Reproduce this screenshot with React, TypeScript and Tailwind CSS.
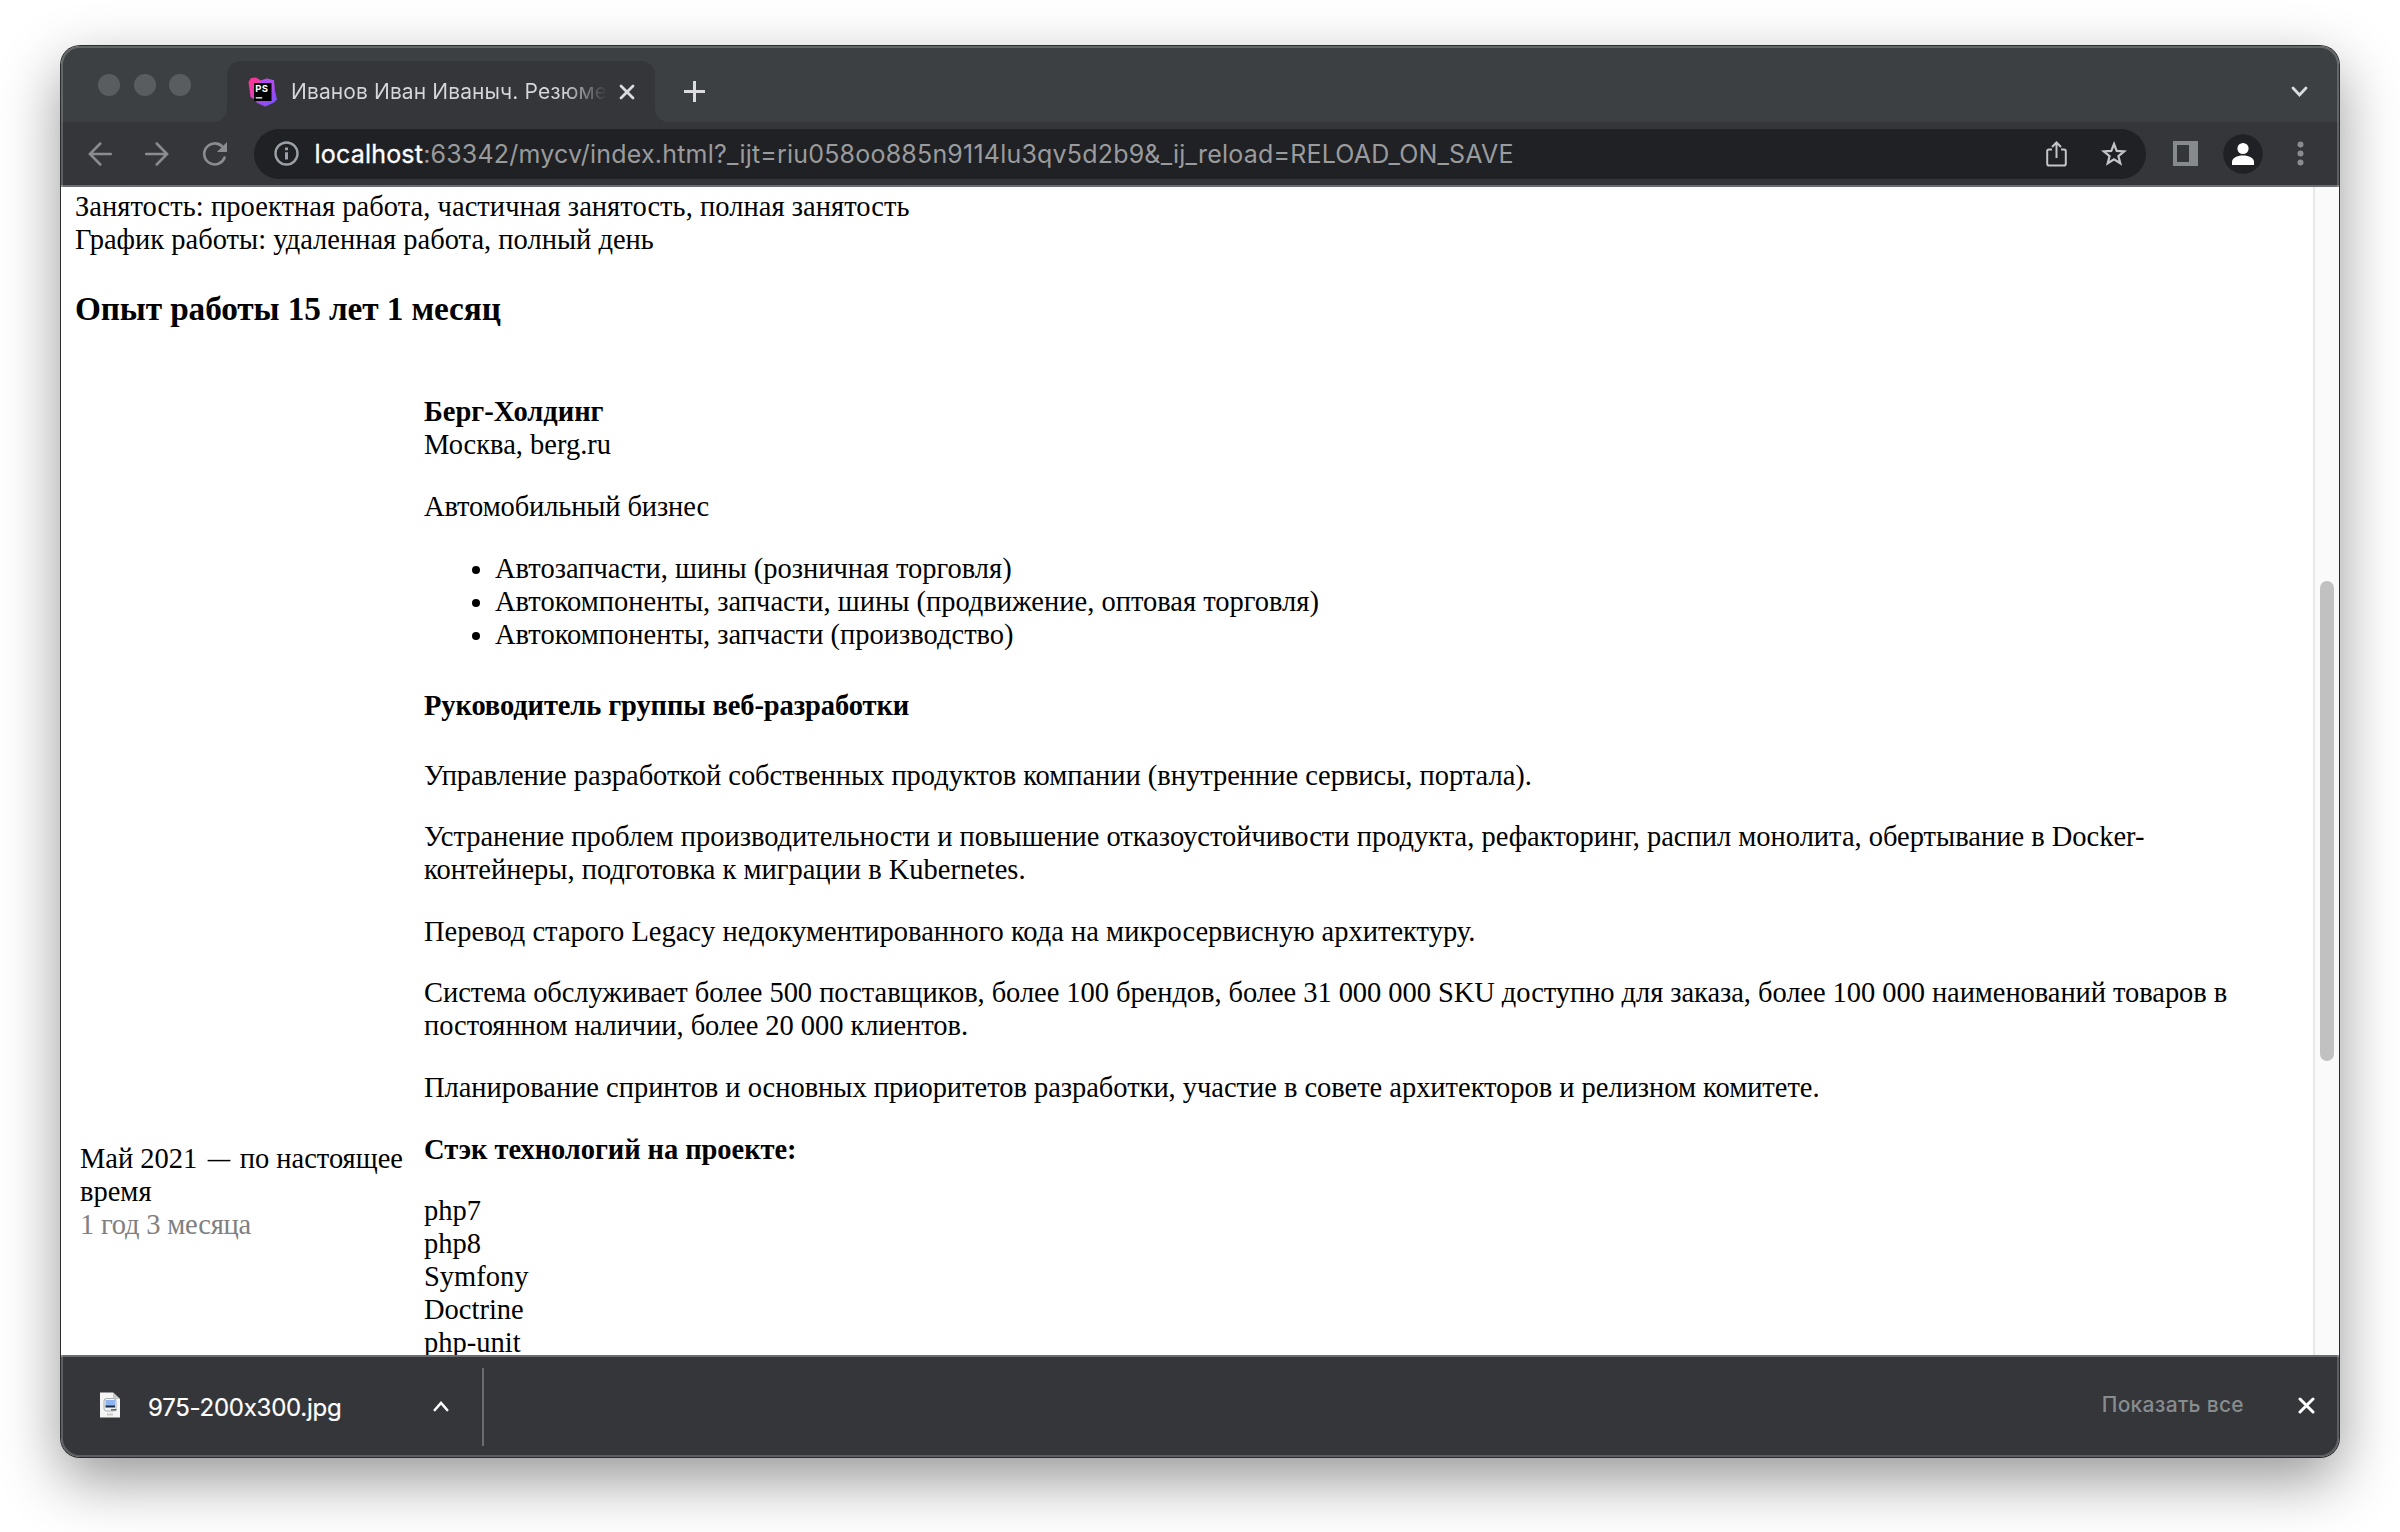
import React from "react";

const P = ({ children, className = "mt-[28.6px]" }: { children: React.ReactNode; className?: string }) => (
  <p className={className}>{children}</p>
);

function TabStrip() {
  return (
    <div className="flex h-[76px] shrink-0 bg-[#3d4042]">
      <div className="flex w-[152px] gap-[13.5px] pl-[37px] pt-[28px]">
        <span className="size-[22px] rounded-full bg-[#5a5d5f]" />
        <span className="size-[22px] rounded-full bg-[#5a5d5f]" />
        <span className="size-[22px] rounded-full bg-[#5a5d5f]" />
      </div>
      <div className="flex h-full items-end">
        <svg className="size-[14px]" viewBox="0 0 14 14" fill="#35363a"><path d="M0 14A14 14 0 0 0 14 0V14Z" /></svg>
        <div className="flex h-[61px] w-[428px] items-center rounded-t-[14px] bg-[#35363a] pl-[21px]">
          <Favicon />
          <span className="ml-[14px] w-[316px] overflow-hidden whitespace-nowrap bg-linear-to-r from-[#d6d7da] from-86% to-transparent bg-clip-text font-['Inter'] text-[21px] leading-[28px] tracking-[0.1px] text-transparent">
            Иванов Иван Иваныч. Резюме
          </span>
          <svg className="ml-[12px] size-[16px]" viewBox="0 0 16 16" stroke="#dadce0" strokeWidth="2.8" strokeLinecap="round"><path d="M2 2L14 14M14 2L2 14" /></svg>
        </div>
        <svg className="size-[14px]" viewBox="0 0 14 14" fill="#35363a"><path d="M14 14A14 14 0 0 1 0 0V14Z" /></svg>
      </div>
      <svg className="ml-[14px] mt-[34px] size-[23px]" viewBox="0 0 23 23" stroke="#dadce0" strokeWidth="3"><path d="M11.500 1V22M1 11.500H22" /></svg>
      <svg className="ml-auto mr-[31px] mt-[40px] h-[12px] w-[17px]" viewBox="0 0 17 12" fill="none" stroke="#dadce0" strokeWidth="2.800" strokeLinecap="round"><path d="M2 2L8.500 9L15 2" /></svg>
    </div>
  );
}

function Favicon() {
  return (
    <svg className="h-[30px] w-[29px]" viewBox="0 0 29 30">
      <defs>
        <linearGradient id="storm" x1="0" y1="0" x2="1" y2="1">
          <stop offset="0" stopColor="#ff318c" />
          <stop offset="0.35" stopColor="#e63fb4" />
          <stop offset="0.6" stopColor="#a845f5" />
          <stop offset="1" stopColor="#6b57ff" />
        </linearGradient>
      </defs>
      <path d="M0.500 5L3 1L8 0.500L13 3.500L19 1.500L26 3.500L26.500 12L29 22.500L26 25.500L17.500 29.500L9 26L7 23L2.500 20Z" fill="url(#storm)" />
      <path d="M13 3.500L19 1.500L26 3.500L26.500 12L23 16V6H11Z" fill="#b04df0" />
      <rect x="6" y="6" width="17.500" height="18" fill="#000" />
      <text x="7.200" y="14.800" fontSize="9.500" fontWeight="700" fontFamily="Inter" fill="#fff" letterSpacing="0.4">PS</text>
      <rect x="7.700" y="20.200" width="6.500" height="1.300" fill="#fff" />
    </svg>
  );
}

function Toolbar() {
  return (
    <div className="flex h-[65px] shrink-0 items-center border-b-2 border-[#6b6c6f] bg-[#35363a] pl-[27px]">
      <svg className="size-[24px]" viewBox="0 0 24 24" fill="none" stroke="#8b8c8f" strokeWidth="2.500" strokeLinecap="round"><path d="M22.800 12H2.500M12.300 1.500L1.900 12L12.300 22.500" /></svg>
      <svg className="ml-[33px] size-[24px]" viewBox="0 0 24 24" fill="none" stroke="#8b8c8f" strokeWidth="2.500" strokeLinecap="round"><path d="M1.200 12H21.500M11.700 1.500L22.100 12L11.700 22.500" /></svg>
      <svg className="ml-[33px] size-[26px]" viewBox="0 0 26 26" fill="none" stroke="#8b8c8f" strokeWidth="2.600" strokeLinecap="round">
        <path d="M20 5.300A10.500 10.500 0 1 0 22.600 16.500" />
        <path d="M25 1V11H15Z" fill="#8b8c8f" stroke="none" />
      </svg>
      <div className="ml-[26px] flex h-[50px] w-[1892px] items-center rounded-full bg-[#202124] pl-[20px] pr-[19px]">
        <svg className="size-[25px]" viewBox="0 0 25 25" fill="none" stroke="#9aa0a6" strokeWidth="2.400">
          <circle cx="12.500" cy="12.500" r="11" />
          <path d="M12.500 11.300V18.500M12.500 6.500V9.200" strokeWidth="3" />
        </svg>
        <span className="ml-[15.5px] mt-[2px] whitespace-nowrap font-['Inter'] text-[25px] tracking-[0.2px] text-[#9a9b9d]">
          <span className="text-white [-webkit-text-stroke:0.3px_white]">localhost</span>:63342/mycv/index.html?_ijt=riu058oo885n9114lu3qv5d2b9&amp;_ij_reload=RELOAD_ON_SAVE
        </span>
        <svg className="ml-auto h-[26px] w-[21px]" viewBox="0 0 21 26" fill="none" stroke="#c4c5c7" strokeWidth="2">
          <path d="M6 8.500H3Q1.200 8.500 1.200 10.300V22.700Q1.200 24.500 3 24.500H18Q19.800 24.500 19.800 22.700V10.300Q19.800 8.500 18 8.500H15M10.500 17V2M6 6L10.500 1.500L15 6" />
        </svg>
        <svg className="ml-[34px] size-[26px]" viewBox="0 0 26 26" fill="none" stroke="#c4c5c7" strokeWidth="2.200">
          <path d="M13 3L15.700 9.900L23.200 10.400L17.400 15.100L19.300 22.300L13 18.300L6.700 22.300L8.600 15.100L2.800 10.400L10.300 9.900Z" />
        </svg>
      </div>
      <svg className="ml-[27px] size-[25px]" viewBox="0 0 25 25"><path fillRule="evenodd" d="M0 0H25V25H0ZM4 4V21H16V4Z" fill="#878a8d" /></svg>
      <svg className="ml-[25px] size-[40px]" viewBox="0 0 40 40">
        <circle cx="20" cy="20" r="19.800" fill="#202124" />
        <circle cx="20" cy="14.500" r="5.600" fill="#fff" />
        <path d="M9 31V28C9 24 14 21.500 20 21.500S31 24 31 28V31Z" fill="#fff" />
      </svg>
      <svg className="ml-[34px] h-[25px] w-[7px]" viewBox="0 0 7 25" fill="#8b8c8f"><circle cx="3.500" cy="3.500" r="3" /><circle cx="3.500" cy="12.500" r="3" /><circle cx="3.500" cy="21.500" r="3" /></svg>
    </div>
  );
}

function Page() {
  return (
    <div className="flex min-h-0 flex-1 overflow-hidden bg-white">
      <div className="w-[2252px] overflow-hidden pl-[14px] font-['Liberation_Serif'] text-[28.5px] leading-[33px] text-black">
        <div className="mt-[2.5px] tracking-[0.045px]">Занятость: проектная работа, частичная занятость, полная занятость</div>
        <div>График работы: удаленная работа, полный день</div>
        <h3 className="mt-[33.5px] text-[33.3px] font-bold leading-[39px] tracking-[-0.11px]">Опыт работы 15 лет 1 месяц</h3>
        <div className="mt-[67px] flex">
          <div className="w-[349px] shrink-0 pl-[5px] pt-[747px]">
            <div>Май 2021 <span className="mx-[3px] inline-block w-[22px] scale-x-[0.79] text-center"><span className="-mx-[4px]">—</span></span> по настоящее<br />время</div>
            <div className="tracking-[-0.2px] text-[#808080]">1 год 3 месяца</div>
          </div>
          <div className="w-[1860px]">
            <div className="font-bold">Берг-Холдинг</div>
            <div>Москва, berg.ru</div>
            <P className="mt-[28.6px] tracking-[-0.12px]">Автомобильный бизнес</P>
            <ul className="mt-[29.3px] list-disc pl-[71px]">
              <li>Автозапчасти, шины (розничная торговля)</li>
              <li>Автокомпоненты, запчасти, шины (продвижение, оптовая торговля)</li>
              <li>Автокомпоненты, запчасти (производство)</li>
            </ul>
            <h4 className="mt-[38px] font-bold tracking-[-0.1px]">Руководитель группы веб-разработки</h4>
            <P className="mt-[37px] tracking-[-0.03px]">Управление разработкой собственных продуктов компании (внутренние сервисы, портала).</P>
            <P className="mt-[28.4px] tracking-[-0.01px]">Устранение проблем производительности и повышение отказоустойчивости продукта, рефакторинг, распил монолита, обертывание в Docker-<br />контейнеры, подготовка к миграции в Kubernetes.</P>
            <P>Перевод старого Legacy недокументированного кода на микросервисную архитектуру.</P>
            <P className="mt-[28.6px] tracking-[-0.06px]">Система обслуживает более 500 поставщиков, более 100 брендов, более 31 000 000 SKU доступно для заказа, более 100 000 наименований товаров в<br />постоянном наличии, более 20 000 клиентов.</P>
            <P className="mt-[28.6px] tracking-[-0.03px]">Планирование спринтов и основных приоритетов разработки, участие в совете архитекторов и релизном комитете.</P>
            <P className="mt-[28.6px] font-bold tracking-[-0.06px]">Стэк технологий на проекте:</P>
            <P>php7<br />php8<br />Symfony<br />Doctrine<br />php-unit</P>
          </div>
        </div>
      </div>
      <div className="flex-1 border-l-2 border-[#e8e8e8] bg-[#fafafa] pl-[5px] pt-[394px]">
        <div className="h-[480px] w-[14px] rounded-full bg-[#c1c1c1]" />
      </div>
    </div>
  );
}

function DownloadBar() {
  return (
    <div className="flex h-[102px] shrink-0 items-center border-t-2 border-[#6b6c6f] bg-[#35363a] pl-[39px]">
      <svg className="-mt-[4px] h-[26px] w-[20px]" viewBox="0 0 20 26">
        <path d="M0 0.500H13L20 7V25.500H0Z" fill="#f4f4f4" />
        <path d="M13 0.500V7H20Z" fill="#c9c9c9" />
        <rect x="4" y="6.500" width="12" height="12.500" rx="2.500" fill="#f0f2f6" stroke="#999" strokeWidth="0.800" />
        <rect x="5.500" y="8" width="9.500" height="6" fill="#8db4ee" />
        <path d="M5.500 13.500H15V15.500H5.500Z" fill="#1d2a44" />
        <path d="M11 17H16.500V18.500H11Z" fill="#666" />
        <rect x="7" y="21.500" width="6" height="2" fill="#c8c8c8" />
      </svg>
      <span className="ml-[28px] mt-[2px] w-[285px] font-['Inter'] text-[24px] tracking-[-0.25px] text-white [-webkit-text-stroke:0.2px_white] [font-feature-settings:'calt'_0]">975-200x300.jpg</span>
      <svg className="-mt-px h-[11px] w-[16px]" viewBox="0 0 16 11" fill="none" stroke="#fff" strokeWidth="2.600" strokeLinecap="round"><path d="M1.800 9L8 2L14.200 9" /></svg>
      <div className="ml-[33px] h-[78px] w-[2px] bg-[#6b6c6f]" />
      <span className="-mt-[4px] ml-auto font-['Inter'] text-[21px] font-medium tracking-[0.3px] text-[#878c8e]">Показать все</span>
      <svg className="-mt-[4px] ml-[54px] mr-[24px] size-[17px]" viewBox="0 0 17 17" stroke="#fff" strokeWidth="3" strokeLinecap="round"><path d="M2 2L15 15M15 2L2 15" /></svg>
    </div>
  );
}

export default function App() {
  return (
    <div className="h-[1532px] w-[2400px] overflow-hidden bg-white pl-[61px] pt-[46px]">
      <div className="relative flex h-[1411px] w-[2278px] flex-col overflow-hidden rounded-[19px] shadow-[0_0_0_1px_#2b2c2e,0_22px_60px_rgba(0,0,0,0.42)]">
        <TabStrip />
        <Toolbar />
        <Page />
        <DownloadBar />
        <div className="pointer-events-none absolute inset-0 rounded-[19px] border-2 border-white/20" />
      </div>
    </div>
  );
}
